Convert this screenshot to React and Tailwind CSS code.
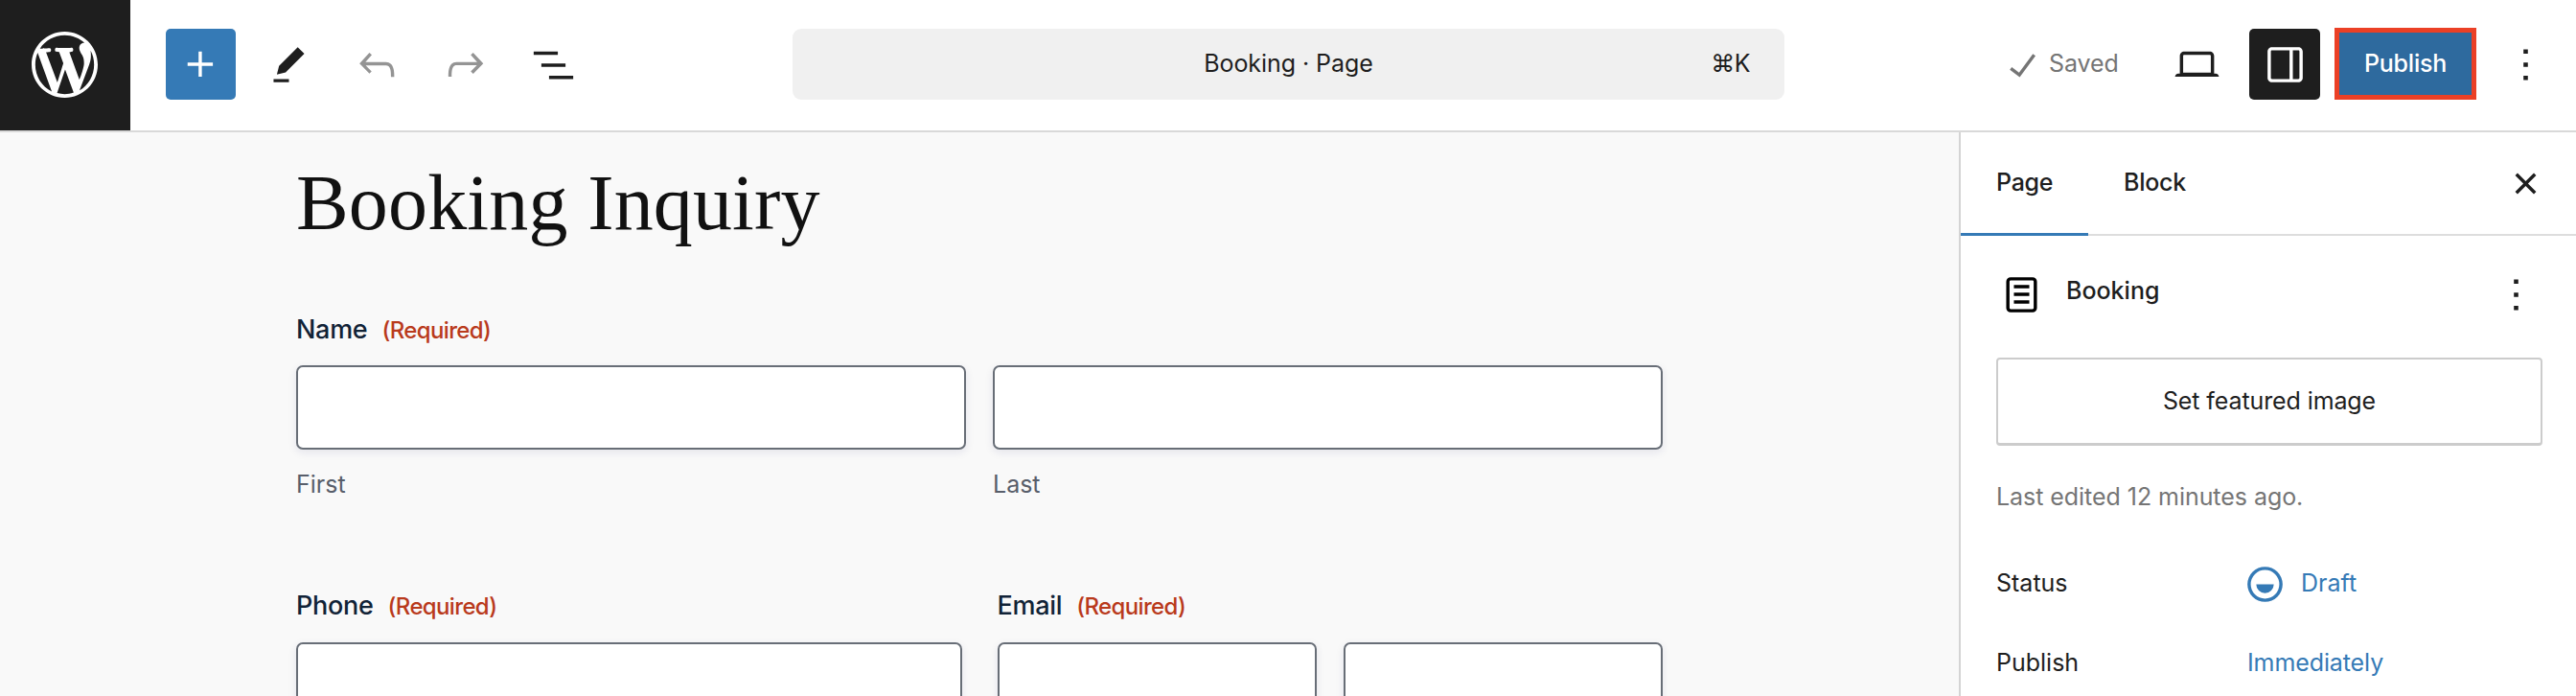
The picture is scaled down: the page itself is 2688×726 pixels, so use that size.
import React, { useState } from 'react';

const icons = {
  plus: 'M11 12.5V17.5H12.5V12.5H17.5V11H12.5V6H11V11H6V12.5H11Z',
  edit: 'm19 7-3-3-8.5 8.5-1 4 4-1L19 7Zm-7 11.5H5V20h7v-1.5Z',
  undo: 'M18.3 11.7c-.6-.6-1.4-.9-2.3-.9H6.7l2.9-3.3-1.1-1-4.5 5L8.5 16l1-1-2.7-2.7H16c.5 0 .9.2 1.3.5 1 1 1 3.4 1 4.5v.3h1.5v-.2c0-1.5 0-4.3-1.5-5.7z',
  redo: 'M15.6 6.5l-1.1 1 2.9 3.3H8c-.9 0-1.7.3-2.3.9-1.4 1.5-1.4 4.2-1.4 5.6v.2h1.5v-.3c0-1.1 0-3.5 1-4.5.3-.3.7-.5 1.3-.5h9.2L14.5 15l1.1 1.1 4.6-4.6-4.6-5z',
  listView: 'M3 6h11v1.5H3V6Zm3.5 5.5h11V13h-11v-1.5ZM21 17H10v1.5h11V17Z',
  check: 'M16.7 7.1l-6.3 8.5-3.3-2.5-.9 1.2 4.5 3.4L17.9 8z',
  desktop: 'M20.5 16h-.7V8c0-1.1-.9-2-2-2H6.2c-1.1 0-2 .9-2 2v8h-.7c-.8 0-1.5.7-1.5 1.5h20c0-.8-.7-1.5-1.5-1.5zM5.7 8c0-.3.2-.5.5-.5h11.6c.3 0 .5.2.5.5v7.6H5.7V8z',
  drawer: 'M18 4H6c-1.1 0-2 .9-2 2v12c0 1.1.9 2 2 2h12c1.1 0 2-.9 2-2V6c0-1.1-.9-2-2-2zm-4 14.5H6c-.3 0-.5-.2-.5-.5V6c0-.3.2-.5.5-.5h8v13zm4.5-.5c0 .3-.2.5-.5.5h-2.5v-13H18c.3 0 .5.2.5.5v12z',
  more: 'M13 19h-2v-2h2v2zm0-6h-2v-2h2v2zm0-6h-2V5h2v2z',
  close: 'M12 13.06l3.712 3.713 1.061-1.06L13.061 12l3.712-3.712-1.06-1.06L12 10.938 8.288 7.227l-1.061 1.06L10.939 12l-3.712 3.712 1.06 1.061L12 13.061z',
  page: 'M15.5 7.5h-7V9h7V7.5Zm-7 3.5h7v1.5h-7V11Zm7 3.5h-7V16h7v-1.5ZM17 4H7a2 2 0 0 0-2 2v12a2 2 0 0 0 2 2h10a2 2 0 0 0 2-2V6a2 2 0 0 0-2-2ZM7 5.5h10a.5.5 0 0 1 .5.5v12a.5.5 0 0 1-.5.5H7a.5.5 0 0 1-.5-.5V6a.5.5 0 0 1 .5-.5Z',
  draft: 'M12 18.5a6.5 6.5 0 1 1 0-13 6.5 6.5 0 0 1 0 13ZM4 12a8 8 0 1 1 16 0 8 8 0 0 1-16 0Zm8 4a4 4 0 0 0 4-4H8a4 4 0 0 0 4 4Z',
};

const Icon = ({ name, className = '' }) => (
  <svg viewBox="0 0 24 24" className={`w-[55px] h-[55px] shrink-0 ${className}`} fill="currentColor" fillRule="evenodd">
    <path d={icons[name]} />
  </svg>
);

const WordPressLogo = () => (
  <svg viewBox="0 0 20 20" className="w-[69px] h-[69px]" fill="currentColor">
    <path d="M20 10c0-5.51-4.49-10-10-10C4.48 0 0 4.49 0 10c0 5.52 4.48 10 10 10 5.51 0 10-4.48 10-10zM7.78 15.37L4.37 6.22c.55-.02 1.17-.08 1.17-.08.5-.06.44-1.13-.06-1.11 0 0-1.45.11-2.37.11-.18 0-.37 0-.58-.01C4.12 2.69 6.87 1.11 10 1.11c2.33 0 4.45.87 6.05 2.34-.68-.11-1.65.39-1.65 1.58 0 .74.45 1.36.9 2.1.35.61.55 1.36.55 2.46 0 1.49-1.4 5-1.4 5l-3.03-8.37c.54-.02.82-.17.82-.17.5-.05.44-1.25-.06-1.22 0 0-1.44.12-2.38.12-.87 0-2.33-.12-2.33-.12-.5-.03-.56 1.2-.06 1.22l.92.08 1.26 3.41zM17.41 10c.24-.64.74-1.87.43-4.25.7 1.29 1.05 2.71 1.05 4.25 0 3.29-1.73 6.24-4.4 7.78.97-2.59 1.94-5.2 2.92-7.78zM6.1 18.09C3.12 16.65 1.11 13.53 1.11 10c0-1.3.23-2.48.72-3.59C3.25 10.3 4.67 14.2 6.1 18.09zm4.03-6.63l2.58 6.98c-.86.29-1.76.45-2.71.45-.79 0-1.57-.11-2.29-.33.81-2.38 1.62-4.74 2.42-7.1z" />
  </svg>
);

const ToolButton = ({ icon, className = '' }) => (
  <button className={`min-w-[73px] h-[74px] rounded-[5px] flex items-center justify-center shrink-0 ${className}`}>
    <Icon name={icon} />
  </button>
);

const FieldLabel = ({ children }) => (
  <label className="flex items-baseline gap-[15px] h-10 leading-10 text-[27px] font-medium tracking-[-0.3px] text-[#112337]">
    {children}
    <span className="text-[24px] tracking-[-0.65px] text-[#b93a1c]">(Required)</span>
  </label>
);

const TextInput = () => (
  <input className="block w-full h-[88px] rounded-[7px] border-2 border-[#686e77] bg-white shadow-[0_3px_10px_rgba(18,25,97,0.09)]" />
);

const Header = () => (
  <header className="flex h-[138px] shrink-0 border-b-2 border-[#d9d9d9] bg-white">
    <div className="w-[136px] h-[136px] pb-px pr-px bg-[#1e1e1e] text-white flex items-center justify-center shrink-0">
      <WordPressLogo />
    </div>
    <div className="flex flex-1 items-center justify-between pb-[2px] pl-[37px] pr-4">
      <div className="flex gap-[19px] w-[654px]">
        <ToolButton icon="plus" className="bg-[#357ab6] text-white" />
        <ToolButton icon="edit" className="text-[#1e1e1e]" />
        <ToolButton icon="undo" className="text-[#949494]" />
        <ToolButton icon="redo" className="text-[#949494]" />
        <ToolButton icon="listView" className="text-[#1e1e1e]" />
      </div>
      <div className="flex items-center w-[1035px] h-[74px] rounded-[9px] bg-[#f0f0f0] px-9">
        <div className="w-16" />
        <div className="flex-1 text-center tracking-[-0.05px]">Booking · Page</div>
        <div className="w-16 text-right tracking-[-0.5px]">⌘K</div>
      </div>
      <div className="flex items-center justify-end w-[810px]">
        <Icon name="check" className="text-[#757575]" />
        <span className="w-[118px] tracking-[-0.1px] text-[#757575]">Saved</span>
        <ToolButton icon="desktop" />
        <ToolButton icon="drawer" className="ml-[18px] w-[74px] bg-[#1e1e1e] text-white" />
        <button className="ml-[15px] -mt-px w-[148px] h-[75px] border-[5px] border-[#eb4026] bg-[#2e6a9e] text-white font-medium tracking-[-0.2px]">
          Publish
        </button>
        <ToolButton icon="more" className="ml-[14px] w-[74px]" />
      </div>
    </div>
  </header>
);

const Editor = () => (
  <main className="flex-1 bg-[#f9f9f9] pl-[309px] pt-[24px]">
    <div className="w-[1426px]">
      <h1 className="h-[100px] leading-[100px] text-[82px] tracking-[0.15px] text-[#111] whitespace-nowrap font-['Liberation_Serif',serif]">
        Booking Inquiry
      </h1>
      <div className="mt-[62px]">
        <FieldLabel>Name</FieldLabel>
        <div className="mt-[17px] grid grid-cols-2 gap-7 text-[#585e6a]">
          {['First', 'Last'].map(name => (
            <div key={name}>
              <TextInput />
              <div className="mt-4 leading-10">{name}</div>
            </div>
          ))}
        </div>
      </div>
      <div className="mt-[87px] grid grid-cols-2 gap-[37px]">
        <div>
          <FieldLabel>Phone</FieldLabel>
          <div className="mt-[18px]">
            <TextInput />
          </div>
        </div>
        <div>
          <FieldLabel>Email</FieldLabel>
          <div className="mt-[18px] grid grid-cols-2 gap-7">
            <TextInput />
            <TextInput />
          </div>
        </div>
      </div>
    </div>
  </main>
);

const Sidebar = () => {
  const [tab, setTab] = useState('Page');

  return (
    <aside className="w-[644px] shrink-0 border-l-2 border-[#d4d4d4] bg-white">
      <div className="flex h-[108px] border-b-2 border-[#dddddd] pr-4">
        {['Page', 'Block'].map(name => (
          <button
            key={name}
            onClick={() => setTab(name)}
            className={`h-[108px] px-[37px] font-medium tracking-[-0.3px] border-b-[3px] ${tab === name ? 'border-[#357ab6]' : 'border-transparent'}`}
          >
            {name}
          </button>
        ))}
        <ToolButton icon="close" className="ml-auto mt-4" />
      </div>

      <div className="pl-[37px] pr-[35px]">
        {/* Document summary */}
        <div className="flex items-center mt-[24px] h-[74px]">
          <Icon name="page" className="-ml-px text-black" />
          <span className="ml-[19px] pb-[6px] font-medium">Booking</span>
          <ToolButton icon="more" className="ml-auto -mr-[9px]" />
        </div>
        <button className="mt-[29px] w-full h-[92px] rounded-[4px] border-2 border-b-[3px] border-[#cccccc] tracking-[-0.1px]">
          Set featured image
        </button>
        <p className="mt-[33px] leading-10 tracking-[-0.05px] text-[#757575]">Last edited 12 minutes ago.</p>
        <div className="mt-[34px] flex items-center h-[74px]">
          <span className="w-[253px]">Status</span>
          <button className="flex items-center gap-[10px] text-[#357ab6]">
            <Icon name="draft" />
            Draft
          </button>
        </div>
        <div className="mt-[9px] flex items-center h-[74px]">
          <span className="w-[262px]">Publish</span>
          <button className="tracking-[-0.1px] text-[#357ab6]">Immediately</button>
        </div>
      </div>
    </aside>
  );
};

const App = () => (
  <div className="flex flex-col w-full h-screen overflow-hidden text-[25px] text-[#1e1e1e] font-['Inter',sans-serif]">
    <Header />
    <div className="flex flex-1 min-h-0 overflow-hidden">
      <Editor />
      <Sidebar />
    </div>
  </div>
);

export default App;
